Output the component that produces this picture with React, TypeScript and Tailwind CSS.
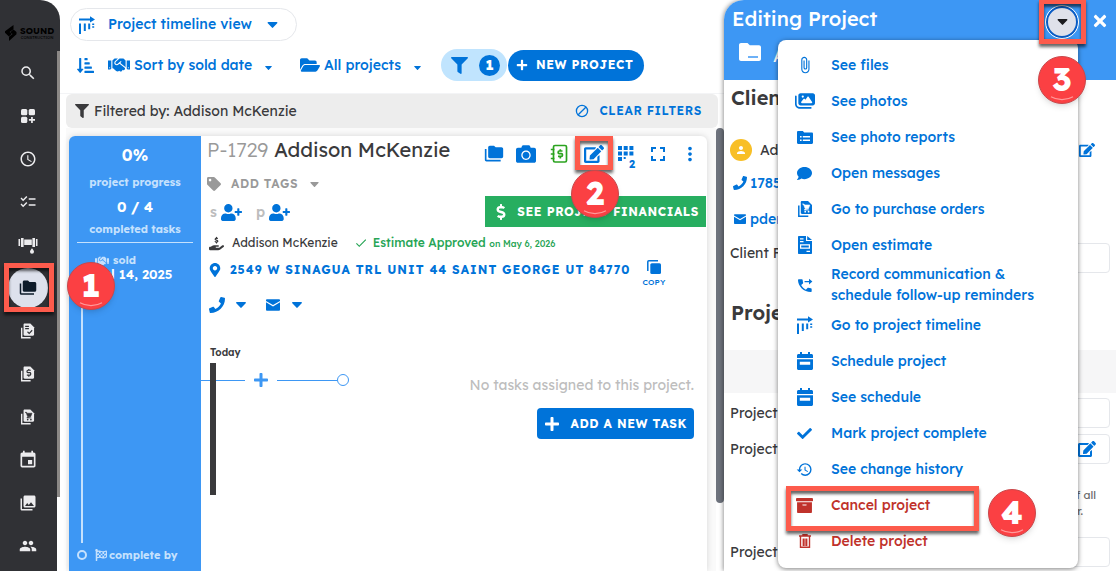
import React, { useState } from 'react';
import {
  MdSearch,
  MdAccessTime,
  MdChecklist,
  MdFolderCopy,
  MdEvent,
  MdPhotoLibrary,
  MdPeople,
  MdFullscreen,
  MdMoreVert,
  MdHistory,
  MdCheck,
  MdPerson,
  MdAttachFile,
} from 'react-icons/md';
import {
  FaHandshake,
  FaFolderOpen,
  FaFilter,
  FaTag,
  FaUserPlus,
  FaCamera,
  FaEdit,
  FaSortAmountDownAlt,
  FaComment,
  FaCheck,
  FaArchive,
  FaPlus,
  FaDollarSign,
  FaFlagCheckered,
  FaTimes,
  FaMapMarkerAlt,
  FaPhone,
} from 'react-icons/fa';
import { FaHandHoldingDollar, FaImages } from 'react-icons/fa6';

type IconProps = { className?: string };

const Caret = ({ className = '' }: IconProps) => (
  <svg viewBox="0 0 10 6" className={className} fill="currentColor">
    <path d="M.8 0h8.4c.7 0 1 .8.5 1.3L5.6 5.6c-.3.4-.9.4-1.2 0L.3 1.3C-.2.8.1 0 .8 0z" />
  </svg>
);

const TimelineIcon = ({ className = '' }: IconProps) => (
  <svg viewBox="0 0 18 18" className={className} fill="currentColor">
    <path d="M1 2.4h11V.2L17 3.4l-5 3.2V4.4H1z" />
    <path d="M1 7.5h2V18H1zM5.8 7.5h2V15h-2zM10.2 7.5h2v5.8h-2zM14.2 7.5h2v1.6h-2zM14.2 10.2h2v1.6h-2z" />
  </svg>
);

const DashboardIcon = ({ className = '' }: IconProps) => (
  <svg viewBox="0 0 16 16" className={className} fill="currentColor">
    <rect x="1" y="1" width="6.3" height="6.3" rx="1.5" />
    <rect x="8.7" y="1" width="6.3" height="6.3" rx="1.5" />
    <rect x="1" y="8.7" width="6.3" height="6.3" rx="1.5" />
    <path d="M11.1 8.9h1.7v2.2H15v1.7h-2.2V15h-1.7v-2.2H8.9v-1.7h2.2z" />
  </svg>
);

const PipeIcon = ({ className = '' }: IconProps) => (
  <svg viewBox="0 0 20 18" className={className} fill="currentColor">
    <path d="M.5 3h1.6v7H.5zM3 2h2.6v9H3zM6.2 3.5h7.6V9H6.2zM14.4 2H17v9h-2.6zM17.9 3h1.6v7h-1.6z" />
    <path d="M14 12.2c1.2 1.5 2 2.4 2 3.5a2 2 0 0 1-4 0c0-1.1.8-2 2-3.5z" />
  </svg>
);

const Stack = ({ className = '', children }: IconProps & { children: React.ReactNode }) => (
  <svg viewBox="0 0 16 18" className={className}>
    <path d="M1.8 5.5v10.7h9.5" fill="none" stroke="currentColor" strokeWidth="1.5" />
    <path d="M5 1h6l4 4v7.8c0 .8-.5 1.2-1.2 1.2H5c-.8 0-1.2-.5-1.2-1.2V2.2C3.800 1.500 4.200 1 5 1z" fill="currentColor" />
    {children}
  </svg>
);

const DocCheckIcon = ({ className }: IconProps) => (
  <Stack className={className}>
    <path d="M5.5 4h4M5.5 6.5h4M8 9.800l1.800 1.700 3.200-3.300" fill="none" stroke="#303135" strokeWidth="1.2" />
  </Stack>
);

const DocDollarIcon = ({ className }: IconProps) => (
  <Stack className={className}>
    <path
      d="M11.5 5H8.3c-.6 0-.8.4-.8 1v.6c0 .6.3.9.8.9h2.2c.6 0 .9.4.9.9v.9c0 .6-.4 1-.9 1H7.3M9.400 3.600V5M9.400 10.500v1.500"
      fill="none"
      stroke="#303135"
      strokeWidth="1.3"
    />
  </Stack>
);

const DocCartIcon = ({ className, cut = '#303135' }: IconProps & { cut?: string }) => (
  <Stack className={className}>
    <path d="M5.5 4H7l.6 1h5.2l-1.400 3.700H8.200L6.800 5zM8 8.900l-.7 1.200h4.900" fill={cut} stroke={cut} strokeWidth=".6" />
    <circle cx="8.2" cy="11.7" r=".9" fill={cut} />
    <circle cx="11.6" cy="11.7" r=".9" fill={cut} />
  </Stack>
);

const EstimateIcon = ({ className = '' }: IconProps) => (
  <svg viewBox="0 0 14 18" className={className} fill="currentColor">
    <path
      fillRule="evenodd"
      d="M1 0h7v5h6v12c0 .6-.4 1-1 1H1c-.6 0-1-.4-1-1V1c0-.6.4-1 1-1zM2 2.300v1.200h3.500V2.300zM2 5v1.200h3.500V5zM2 8.200v4.600h10V8.200zM3.200 9.400h7.600v2.200H3.200zM8.500 14.800V16H12v-1.200z"
    />
    <path d="M9.200 0L14 3.900H9.200z" />
  </svg>
);

const CalendarIcon = ({ className = '' }: IconProps) => (
  <svg viewBox="0 0 16 18" className={className} fill="currentColor">
    <path d="M3 0h2v2h6V0h2v2h1.500c.8 0 1.500.7 1.500 1.500V6H0V3.500C0 2.700.7 2 1.500 2H3z" />
    <path fillRule="evenodd" d="M0 7.200h16v9.300c0 .8-.7 1.500-1.500 1.500h-13C.7 18 0 17.300 0 16.500zM2.800 9.800v3h10.400v-3z" />
  </svg>
);

const CallForwardIcon = ({ className = '' }: IconProps) => (
  <svg viewBox="0 0 18 18" className={className} fill="currentColor">
    <path d="M2 2.500h3.500c.5 0 .9.400.9.900 0 1 .2 2 .5 2.900.1.300 0 .7-.2.900L4.700 9c1.300 2.400 3 4.100 5.300 5.300l1.800-1.800c.3-.3.600-.4 1-.3.900.300 1.800.500 2.800.500.5 0 .9.400.9.900V16c0 .5-.4 1-.9 1C7.700 17 1.100 10.400 1.100 3.400c0-.5.400-.9.900-.9z" />
    <path d="M8.500 4.500h5V2l3.800 3.200-3.800 3.200V6h-5z" />
  </svg>
);

const MailIcon = ({ className = '' }: IconProps) => (
  <svg viewBox="0 0 16 13" className={className} fill="currentColor">
    <path d="M1 0h14c.6 0 1 .4 1 1v.8L8 6.600 0 1.800V1c0-.6.400-1 1-1z" />
    <path d="M0 3.400l8 4.800 8-4.800V12c0 .6-.4 1-1 1H1c-.6 0-1-.4-1-1z" />
  </svg>
);

const LedgerIcon = ({ className = '' }: IconProps) => (
  <svg viewBox="0 0 18 20" className={className} fill="none" stroke="currentColor" strokeWidth="1.7">
    <rect x="3.5" y="1.5" width="13" height="16.5" rx="1.5" />
    <path d="M.8 5.500h3.600M.8 10h3.600M.8 14.500h3.600" />
    <path d="M12.500 7H9.200c-.6 0-1 .3-1 .9v.9c0 .6.400.9 1 .9h2.200c.6 0 1 .3 1 .9v.9c0 .6-.4.900-1 .900H8M10.300 5.200V7M10.300 12.400v2" />
  </svg>
);

const GridIcon = ({ className = '' }: IconProps) => (
  <svg viewBox="0 0 16 15" className={className} fill="currentColor">
    <path d="M0 0h4v4H0zM5.700 0h4v4h-4zM11.400 0h4v4h-4zM0 5.500h4v4H0zM5.700 5.500h4v4h-4zM11.400 5.500h4v4h-4zM0 11h4v4H0zM5.700 11h2v2h-2z" />
  </svg>
);

const CopyIcon = ({ className = '' }: IconProps) => (
  <svg viewBox="0 0 14 14" className={className}>
    <path d="M.8 11V1.800c0-.6.400-1 1-1H11" fill="none" stroke="currentColor" strokeWidth="1.5" />
    <rect x="3.3" y="3.3" width="10.7" height="10.7" rx="1.5" fill="currentColor" />
  </svg>
);

const ClearIcon = ({ className = '' }: IconProps) => (
  <svg viewBox="0 0 14 14" className={className} fill="none" stroke="currentColor" strokeWidth="1.3">
    <circle cx="7" cy="7" r="5.6" />
    <path d="M3.200 10.800l7.600-7.600" />
  </svg>
);

const ReportIcon = ({ className = '' }: IconProps) => (
  <svg viewBox="0 0 16 13" className={className} fill="currentColor">
    <path
      fillRule="evenodd"
      d="M1.200 0h4.600l1.400 1.500h7.600c.7 0 1.200.5 1.200 1.200v9.100c0 .7-.5 1.200-1.200 1.200H1.200C.5 13 0 12.500 0 11.800V1.200C0 .5.500 0 1.200 0zM3 5v1.600h1.600V5zm2.800 0v1.600H13V5zM3 8.500v1.600h1.600V8.500zm2.800 0v1.600H13V8.500z"
    />
  </svg>
);

const TrashIcon = ({ className = '' }: IconProps) => (
  <svg viewBox="0 0 12 14" className={className} fill="none" stroke="currentColor" strokeWidth="1.4">
    <path d="M0 2h12M4 1.800V.8h4v1M1.500 2.500v10.700h9V2.500M4.300 4.500V12M6 4.500V12M7.700 4.500V12" />
  </svg>
);

const FolderMinusIcon = ({ className = '' }: IconProps) => (
  <svg viewBox="0 0 22 18" className={className} fill="currentColor">
    <path
      fillRule="evenodd"
      d="M2 0h6.500l2.300 2.200H20c1.100 0 2 .9 2 2V16c0 1.100-.9 2-2 2H2c-1.100 0-2-.9-2-2V2C0 .900.900 0 2 0zm7 13.300v1.400h10v-1.400z"
    />
  </svg>
);

const LogoMark = ({ className = '' }: IconProps) => (
  <svg viewBox="0 0 12 16" className={className} fill="currentColor">
    <path d="M8.500 0v4.200L4.600 7l2.200 1.700-2.900 2.700L0 7.800V6.300z" />
    <path d="M11.500 7v2.200L4 16v-4.200L7.600 9 5.200 7.200 8.400 4.500z" />
  </svg>
);

// Numbered step marker
const StepBadge = ({ n, className }: { n: number; className: string }) => (
  <span
    className={`absolute z-30 flex size-12 items-center justify-center rounded-full border border-[#c9484b] bg-[#fb4043] pb-[2px] text-[32px] leading-none font-extrabold text-white shadow-md ${className}`}
  >
    {n}
    <svg viewBox="0 0 48 48" className="absolute inset-0" fill="none">
      <path d="M12.500 41.500c7 4 16 4 23 0" stroke="#ff9a9b" strokeWidth="1.2" />
    </svg>
  </span>
);

const Outline = ({ className }: { className: string }) => (
  <span
    className={`pointer-events-none absolute z-20 border-[5px] border-[#fd5b4c] shadow-[0_3px_3px_rgba(0,0,0,0.6),inset_0_3px_3px_rgba(0,0,0,0.6)] ${className}`}
  />
);

const navItems = [
  { label: 'Search', Icon: MdSearch, size: 'size-[18px]' },
  { label: 'Dashboard', Icon: DashboardIcon, size: 'size-4' },
  { label: 'Time', Icon: MdAccessTime, size: 'size-[18px]' },
  { label: 'Tasks', Icon: MdChecklist, size: 'size-[18px]' },
  { label: 'Plumbing', Icon: PipeIcon, size: 'w-5 h-[18px]' },
  { label: 'Projects', Icon: MdFolderCopy, size: 'size-[18px]', active: true },
  { label: 'Estimates', Icon: DocCheckIcon, size: 'w-[15px] h-[18px]' },
  { label: 'Invoices', Icon: DocDollarIcon, size: 'w-[15px] h-[18px]' },
  { label: 'Purchase orders', Icon: DocCartIcon, size: 'w-[15px] h-[18px]' },
  { label: 'Calendar', Icon: MdEvent, size: 'size-5' },
  { label: 'Photos', Icon: MdPhotoLibrary, size: 'size-[18px]' },
  { label: 'People', Icon: MdPeople, size: 'size-[18px]' },
];

const menuItems = [
  { label: 'See files', icon: <MdAttachFile className="size-[18px]" /> },
  { label: 'See photos', icon: <FaImages className="size-5" /> },
  { label: 'See photo reports', icon: <ReportIcon className="h-[13px] w-4" /> },
  { label: 'Open messages', icon: <FaComment className="size-[15px]" /> },
  { label: 'Go to purchase orders', icon: <DocCartIcon className="h-[18px] w-4" cut="#fff" /> },
  { label: 'Open estimate', icon: <EstimateIcon className="h-[18px] w-[14px]" /> },
  { label: 'Record communication & schedule follow-up reminders', icon: <CallForwardIcon className="size-4" />, tall: true },
  { label: 'Go to project timeline', icon: <TimelineIcon className="size-[18px]" /> },
  { label: 'Schedule project', icon: <CalendarIcon className="h-[18px] w-4" /> },
  { label: 'See schedule', icon: <CalendarIcon className="h-[18px] w-4" /> },
  { label: 'Mark project complete', icon: <FaCheck className="size-[15px]" /> },
  { label: 'See change history', icon: <MdHistory className="size-[17px]" /> },
  { label: 'Cancel project', icon: <FaArchive className="size-[17px]" />, danger: true, marked: true },
  { label: 'Delete project', icon: <TrashIcon className="h-3.5 w-3" />, danger: true },
];

function Sidebar() {
  return (
    <aside className="relative flex w-[60px] shrink-0 flex-col">
      <div className="flex h-[51px] shrink-0 items-end gap-[3px] rounded-tr-[20px] bg-[#303135] pb-[10px] pl-[5px] text-black">
        <LogoMark className="h-4 w-3" />
        <div className="text-center">
          <p className="text-[9px] leading-[9px] font-bold">SOUND</p>
          <p className="text-[4px] leading-[6px]">CONSTRUCTION</p>
        </div>
      </div>
      <div className="flex min-h-0 flex-1">
        <nav className="flex-1 bg-[#303135] pr-[2px]">
          {navItems.map(({ label, Icon, size, active }) => (
            <a key={label} href="#" aria-label={label} className="relative flex h-[43px] items-center justify-center text-[#ececee]">
              {active ? (
                <span className="flex size-10 items-center justify-center rounded-full bg-[#dde1ec] text-[#0d1b2a]">
                  <Icon className={size} />
                </span>
              ) : (
                <Icon className={size} />
              )}
              {active && (
                <>
                  <Outline className="right-px left-1 -inset-y-[3px]" />
                  <StepBadge n={1} className="-top-1 left-[67px]" />
                </>
              )}
            </a>
          ))}
        </nav>
        <div className="h-[446px] w-[3px] bg-[#8b8886]" />
      </div>
    </aside>
  );
}

function Dropdown({ label, value }: { label: string; value: string }) {
  return (
    <select aria-label={label} className="appearance-none bg-transparent text-[14px] font-medium outline-none">
      <option>{value}</option>
    </select>
  );
}

function Toolbar() {
  return (
    <div className="h-[94px] shrink-0 border-b border-gray-100 pt-2 pl-[10px] text-[#0073d9]">
      <div className="flex h-[33px] w-[227px] items-center rounded-full border border-gray-200 pl-[7px]">
        <TimelineIcon className="mr-3 size-[18px]" />
        <Dropdown label="View" value="Project timeline view" />
        <Caret className="ml-auto mr-[18px] h-[6px] w-[11px]" />
      </div>
      <div className="mt-2 flex h-8 items-center pl-[7px]">
        <FaSortAmountDownAlt className="mr-[14px] size-[17px]" />
        <FaHandshake className="mr-1 size-[22px]" />
        <Dropdown label="Sort" value="Sort by sold date" />
        <Caret className="mt-[6px] ml-3 h-1 w-[7px]" />
        <FaFolderOpen className="mr-1 ml-7 size-5" />
        <Dropdown label="Projects" value="All projects" />
        <Caret className="mt-[6px] ml-[13px] h-1 w-[7px]" />
        <button className="ml-5 flex h-8 w-[66px] shrink-0 items-center justify-between rounded-full bg-[#c0e4fe] pr-[7px] pl-[10px]">
          <FaFilter className="size-[17px]" />
          <span className="flex size-[21px] items-center justify-center rounded-full bg-[#0073d9] text-sm font-extrabold text-white">1</span>
        </button>
        <button className="ml-px flex h-[31px] shrink-0 items-center gap-2 rounded-full bg-[#0073d9] pr-[10px] pl-2 text-xs font-bold tracking-wider whitespace-nowrap text-white">
          <FaPlus className="size-3" />
          NEW PROJECT
        </button>
      </div>
    </div>
  );
}

function ProgressColumn() {
  return (
    <div className="flex w-[132px] shrink-0 flex-col bg-[#3d97f4] px-2 pt-[9px] text-center text-[11px] font-bold text-[#c5e1fd]">
      <p className="text-base leading-5 text-white">0%</p>
      <p className="mt-[9px] leading-4">project progress</p>
      <p className="mt-2 text-sm leading-[18px] text-white">0 / 4</p>
      <p className="mt-[5px] leading-4">completed tasks</p>
      <div className="mt-[5px] h-px shrink-0 bg-[#c5e1fd]" />
      <div className="flex min-h-0 flex-1 flex-col pt-[11px] pb-2 text-left">
        <div className="pl-[18px]">
          <p className="flex h-[13px] items-center gap-1">
            <FaHandshake className="size-[14px]" /> sold
          </p>
          <p className="text-[13px] leading-[14px] font-semibold whitespace-nowrap text-white">Jul 14, 2025</p>
        </div>
        <div className="ml-1 w-[2px] flex-1 bg-[#c5e1fd]" />
        <p className="mt-1 flex items-center leading-4">
          <span className="mr-2 size-[10px] rounded-full border-2 border-[#c5e1fd]" />
          <FaFlagCheckered className="mr-[2px] size-3" /> complete by
        </p>
      </div>
    </div>
  );
}

function ProjectCard() {
  return (
    <div className="flex min-h-0 flex-1 overflow-hidden rounded-t-md bg-white shadow-[0_0_6px_rgba(0,0,0,0.15)]">
      <ProgressColumn />
      <div className="min-w-0 flex-1 text-[#3a3a3c]">
        <div className="flex h-[92px] justify-between">
          <div className="pl-[6px]">
            <h2 className="text-xl leading-7 whitespace-nowrap">
              <span className="font-light text-[#999]">P-1729</span> Addison McKenzie
            </h2>
            <button className="flex h-10 items-center text-xs font-semibold tracking-wider text-[#999]">
              <FaTag className="mr-[10px] size-[14px]" />
              ADD TAGS
              <Caret className="ml-3 h-[5px] w-[9px]" />
            </button>
            <div className="flex h-4 items-center pl-[3px] text-sm font-semibold text-[#bdbdbd]">
              s <FaUserPlus className="mr-[14px] ml-1 size-[21px] text-[#0073d9]" />
              p <FaUserPlus className="ml-1 size-[21px] text-[#0073d9]" />
            </div>
          </div>
          <div className="flex flex-col items-end">
            <div className="mb-[25px] flex h-[35px] items-center pr-[6px] text-[#0073d9]">
              <button aria-label="Folders" className="mr-3"><MdFolderCopy className="size-5" /></button>
              <button aria-label="Camera" className="mr-[14px]"><FaCamera className="size-5" /></button>
              <button aria-label="Ledger" className="mr-4 text-[#2ba31f]"><LedgerIcon className="h-5 w-[18px]" /></button>
              <button aria-label="Edit" className="relative mr-[14px]">
                <FaEdit className="size-5" />
                <Outline className="-inset-x-[9px] -top-2 -bottom-[6px]" />
                <StepBadge n={2} className="top-[26px] -left-[13px]" />
              </button>
              <button aria-label="Grid" className="relative mr-3">
                <GridIcon className="h-[15px] w-4" />
                <span className="absolute -right-px -bottom-[9px] text-[11px] leading-none font-bold">2</span>
              </button>
              <button aria-label="Fullscreen" className="mr-[9px]"><MdFullscreen className="size-6" /></button>
              <button aria-label="More"><MdMoreVert className="size-[22px]" /></button>
            </div>
            <button className="mr-px flex h-[31px] items-center bg-[#27ae60] pr-[7px] pl-2 text-xs font-bold tracking-wider whitespace-nowrap text-white">
              <FaDollarSign className="mr-2 size-4" />
              SEE PROJECT FINANCIALS
            </button>
          </div>
        </div>
        <div className="flex h-[30px] items-center pl-2 text-[12px] whitespace-nowrap">
          <FaHandHoldingDollar className="mr-2 size-[15px]" />
          Addison McKenzie
          <MdCheck className="mr-[5px] ml-4 size-[14px] text-[#27a556]" />
          <span className="font-medium text-[#27a556]">
            Estimate Approved <span className="text-[9px]">on May 6, 2026</span>
          </span>
        </div>
        <div className="flex h-[30px] items-start pl-[7px] text-[#0073d9]">
          <FaMapMarkerAlt className="mt-[5px] mr-2 size-[14px]" />
          <a href="#" className="mr-3 text-xs leading-6 font-bold tracking-[1px] whitespace-nowrap">
            2549 W SINAGUA TRL UNIT 44 SAINT GEORGE UT 84770
          </a>
          <button className="flex flex-col items-center pt-[2px] text-[8px] leading-[10px] font-medium tracking-wide">
            <CopyIcon className="mb-[3px] size-[14px]" />
            COPY
          </button>
        </div>
        <div className="flex h-[34px] items-center pl-2 text-[#0073d9]">
          <FaPhone className="size-4" />
          <Caret className="mr-5 ml-[11px] h-[6px] w-[10px]" />
          <MailIcon className="h-3 w-[14px]" />
          <Caret className="ml-3 h-[6px] w-[10px]" />
        </div>
        <p className="mt-[25px] mb-1 pl-[9px] text-[10px] leading-3 font-semibold">Today</p>
        <div className="relative flex items-start justify-between pr-[13px]">
          <div className="absolute left-[9px] h-[132px] w-[6px] bg-[#3a3a3c]" />
          <div className="mt-[10px] flex h-[14px] items-center text-[#3d97f4]">
            <div className="mr-2 h-px w-11 bg-[#3d97f4]" />
            <FaPlus className="mr-2 size-4" />
            <div className="h-px w-[60px] bg-[#3d97f4]" />
            <span className="size-3 rounded-full border border-[#3d97f4]" />
          </div>
          <div className="flex flex-col items-end pt-3">
            <p className="text-[14px] leading-5 text-[#bdbdbd]">No tasks assigned to this project.</p>
            <button className="mt-[13px] flex h-[31px] items-center gap-[10px] rounded bg-[#0073d9] px-[7px] text-xs font-bold tracking-wider whitespace-nowrap text-white">
              <FaPlus className="size-4" />
              ADD A NEW TASK
            </button>
          </div>
        </div>
      </div>
    </div>
  );
}

function ActionMenu() {
  return (
    <div className="absolute top-10 right-[38px] z-10 w-[300px] rounded-lg bg-white pt-[7px] pb-[9px] shadow-[0_1px_5px_rgba(0,0,0,0.5)]">
      {menuItems.map(({ label, icon, tall, danger, marked }) => (
        <button
          key={label}
          className={`relative flex w-full items-center pr-8 text-left text-[14px] leading-[21px] font-medium ${tall ? 'h-11' : 'h-9'} ${
            danger ? 'text-[#c0322b]' : 'text-[#0073d9]'
          }`}
        >
          <span className="flex w-[53px] shrink-0 justify-center">{icon}</span>
          {label}
          {marked && (
            <>
              <Outline className="top-[-1px] right-[99px] -bottom-[8px] left-2" />
              <StepBadge n={4} className="top-[2px] left-[210px]" />
            </>
          )}
        </button>
      ))}
    </div>
  );
}

function Field({ id, label, raised }: { id: string; label: string; raised?: boolean }) {
  return (
    <div className="flex h-[30px] items-center px-[6px] text-[14px]">
      <label htmlFor={id} className={`w-[120px] shrink-0 ${raised ? 'self-start' : ''}`}>{label}</label>
      <input id={id} className="h-full min-w-0 flex-1 rounded border border-gray-200 outline-none" />
    </div>
  );
}

function EditDrawer({ menuOpen, onToggle }: { menuOpen: boolean; onToggle: () => void }) {
  return (
    <section className="relative z-10 flex w-[392px] shrink-0 flex-col overflow-hidden rounded-tl-[20px] bg-white text-[#3a3a3c] shadow-[-1px_0_4px_rgba(0,0,0,0.4)]">
      <header className="h-20 shrink-0 bg-[#3d97f4] text-white">
        <div className="flex h-10 items-center pr-[7px] pl-2">
          <h1 className="pb-[2px] text-xl font-medium">Editing Project</h1>
          <div className="relative mt-1 ml-auto mr-[13px]">
            <button
              aria-label="Actions"
              onClick={onToggle}
              className="flex size-8 items-center justify-center rounded-full border-2 border-[#0b5cc4] bg-[#dfe1ea] text-[#1b1b1f] outline outline-white"
            >
              <Caret className="h-[6px] w-[11px]" />
            </button>
            <Outline className="-top-[7px] -right-2 -bottom-[6px] -left-[7px]" />
            <StepBadge n={3} className="top-[50px] -left-2" />
          </div>
          <button aria-label="Close" className="mt-[2px]"><FaTimes className="size-[18px]" /></button>
        </div>
        <div className="flex items-start gap-3 pt-[3px] pl-[15px] text-lg leading-[26px]">
          <FolderMinusIcon className="h-[18px] w-[22px]" />
          Addison McKenzie
        </div>
      </header>
      <div className="pt-[5px]">
        <h3 className="pl-[7px] text-xl leading-[26px] font-semibold">Client</h3>
        <div className="mt-[26px] flex h-[26px] items-center pr-[21px] pl-[6px] text-sm">
          <span className="mr-2 flex size-[22px] items-center justify-center rounded-full bg-[#f8bf26] text-white">
            <MdPerson className="size-3" />
          </span>
          Addison
          <FaEdit className="ml-auto size-4 text-[#0073d9]" />
        </div>
        <a href="#" className="mt-[7px] flex h-[26px] items-center pl-[9px] text-sm font-medium text-[#0073d9]">
          <FaPhone className="mr-[3px] size-[14px]" /> 1785
        </a>
        <a href="#" className="mt-[10px] flex h-[26px] items-center pl-[10px] text-sm font-medium text-[#0073d9]">
          <MailIcon className="mr-1 h-[10px] w-3" /> pder
        </a>
        <div className="mt-[11px]">
          <Field id="client-f" label="Client F" raised />
        </div>
        <h3 className="mt-[27px] pl-[7px] text-xl leading-[26px] font-semibold">Project</h3>
        <div className="mt-6 h-[43px] bg-[#f6f6f7]" />
        <div className="mt-[5px] mb-[6px]">
          <Field id="project-1" label="Project" />
        </div>
        <div className="relative">
          <Field id="project-2" label="Project" />
          <button aria-label="Edit field" className="absolute top-[6px] right-5 text-[#0073d9]"><FaEdit className="size-[18px]" /></button>
        </div>
        <p className="mt-[23px] mb-[18px] pr-5 text-right text-[11px] leading-4 text-[#666]">
          of all
          <span className="block pr-[13px]">r.</span>
        </p>
        <Field id="project-3" label="Project" />
      </div>
      {menuOpen && <ActionMenu />}
    </section>
  );
}

export default function App() {
  const [menuOpen, setMenuOpen] = useState(true);

  return (
    <div className="flex h-screen overflow-hidden bg-white font-['Lexend','Inter',sans-serif]">
      <Sidebar />
      <main className="flex min-w-0 flex-1 flex-col">
        <Toolbar />
        <div className="flex min-h-0 flex-1">
          <div className="flex min-w-0 flex-1 flex-col pl-[6px]">
            <div className="-mr-[2px] flex h-[34px] shrink-0 items-center rounded-md bg-[#ededed] pr-4 pl-[9px] text-[#3a3a3c]">
              <FaFilter className="mr-[5px] size-[14px]" />
              <span className="text-[14px]">Filtered by: Addison McKenzie</span>
              <button className="ml-auto flex items-center gap-[10px] text-xs font-semibold tracking-wider text-[#0073d9]">
                <ClearIcon className="size-[14px]" />
                CLEAR FILTERS
              </button>
            </div>
            <div className="flex min-h-0 flex-1 flex-col bg-[#fafafa] pt-2 pr-[9px] pl-[3px]">
              <ProjectCard />
            </div>
          </div>
          <div className="mt-[34px] h-[375px] w-2 rounded-full bg-[#6e737d]" />
        </div>
      </main>
      <EditDrawer menuOpen={menuOpen} onToggle={() => setMenuOpen(!menuOpen)} />
    </div>
  );
}
